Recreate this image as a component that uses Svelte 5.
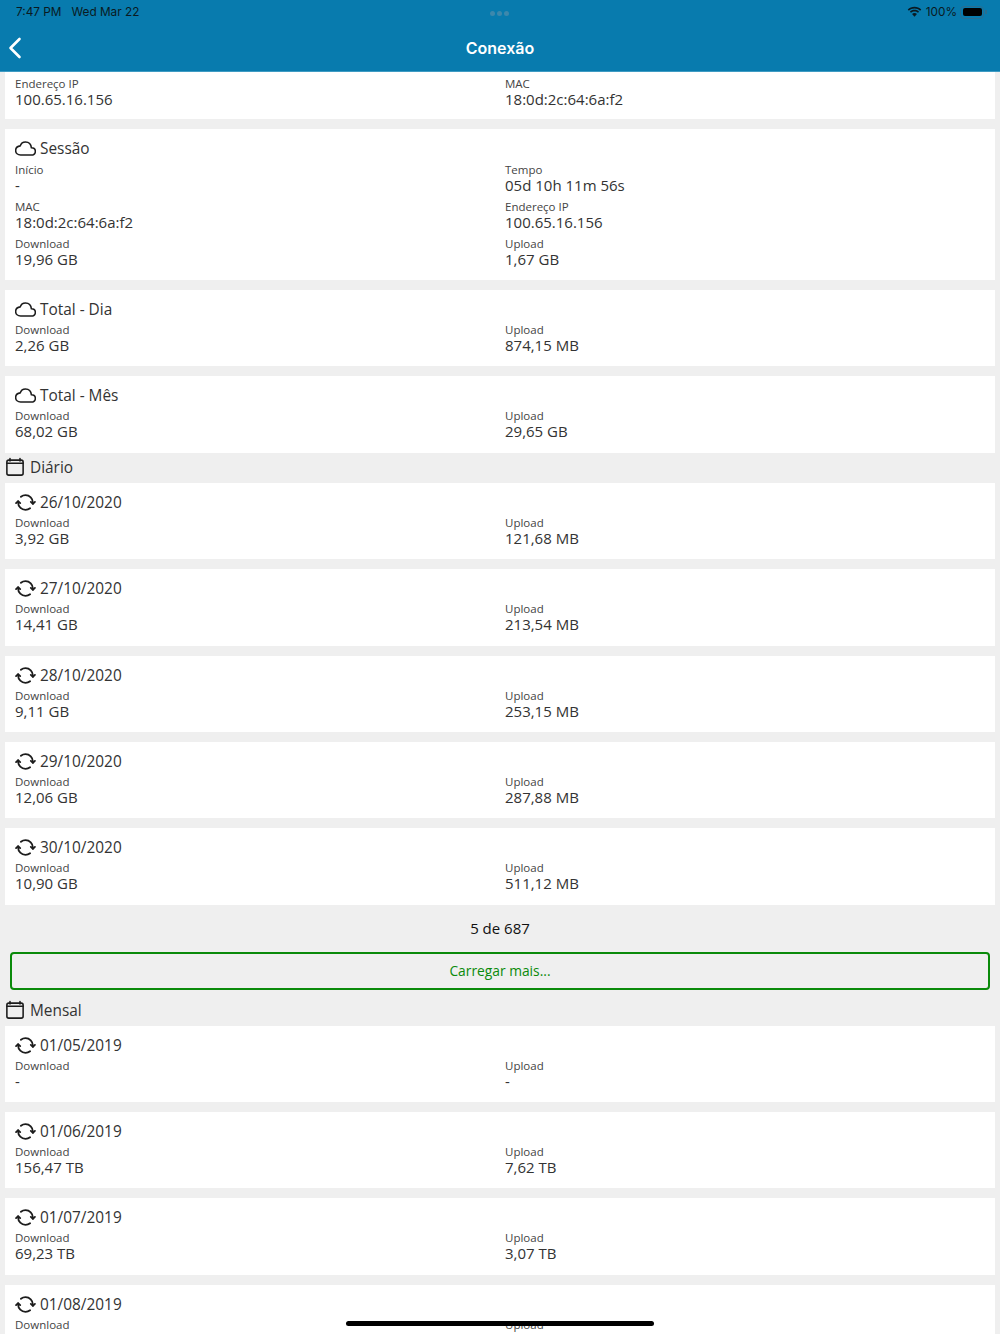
<script>
  const session = [
    [['Início', '-'], ['Tempo', '05d 10h 11m 56s']],
    [['MAC', '18:0d:2c:64:6a:f2'], ['Endereço IP', '100.65.16.156']],
    [['Download', '19,96 GB'], ['Upload', '1,67 GB']]
  ];
  const totals = [
    { title: 'Total - Dia', down: '2,26 GB', up: '874,15 MB' },
    { title: 'Total - Mês', down: '68,02 GB', up: '29,65 GB' }
  ];
  const daily = [
    { title: '26/10/2020', down: '3,92 GB', up: '121,68 MB' },
    { title: '27/10/2020', down: '14,41 GB', up: '213,54 MB' },
    { title: '28/10/2020', down: '9,11 GB', up: '253,15 MB' },
    { title: '29/10/2020', down: '12,06 GB', up: '287,88 MB' },
    { title: '30/10/2020', down: '10,90 GB', up: '511,12 MB' }
  ];
  const monthly = [
    { title: '01/05/2019', down: '-', up: '-' },
    { title: '01/06/2019', down: '156,47 TB', up: '7,62 TB' },
    { title: '01/07/2019', down: '69,23 TB', up: '3,07 TB' },
    { title: '01/08/2019', down: '', up: '' }
  ];
</script>

{#snippet cloud()}
  <svg class="icon" viewBox="0 0 512 512" fill="none" stroke="currentColor" stroke-width="38" stroke-linejoin="round">
    <path d="M400 240c-8.89-89.54-71-144-144-144-69 0-113.44 48.2-128 96C68 198 16 235.59 16 304c0 66 54 112 120 112h260c55 0 100-27.44 100-96 0-67.72-56-77.84-96-80z" />
  </svg>
{/snippet}

{#snippet sync()}
  <svg class="icon" viewBox="0 0 512 512" fill="none" stroke="currentColor" stroke-width="44" stroke-linecap="round" stroke-linejoin="round">
    <path d="M436 285v-29c0-98.73-80.24-178.79-179.2-178.79a179 179 0 00-112 40" />
    <path d="M76 227v29c0 99 81 179 180 179a180 180 0 00112-40" />
    <path d="M26 272l50-50 50 50M486 240l-50 50-50-50" />
  </svg>
{/snippet}

{#snippet calendar()}
  <svg class="icon cal" viewBox="0 0 512 512" fill="none" stroke="currentColor" stroke-width="40" stroke-linecap="round" stroke-linejoin="round">
    <rect x="48" y="80" width="416" height="384" rx="48" />
    <path d="M128 40v60M384 40v60" />
    <path d="M464 160H48" />
  </svg>
{/snippet}

{#snippet field(label, value)}
  <div class="field">
    <div class="label">{label}</div>
    <div class="value">{value}</div>
  </div>
{/snippet}

{#snippet card(item, icon)}
  <section class="card">
    <h2 class="title">{@render icon()}<span>{item.title}</span></h2>
    <div class="grid">
      {@render field('Download', item.down)}
      {@render field('Upload', item.up)}
    </div>
  </section>
{/snippet}

<div class="screen">
  <header class="header">
    <div class="status">
      <div class="status-left"><span>7:47 PM</span><span>Wed Mar 22</span></div>
      <div class="dots"><i></i><i></i><i></i></div>
      <div class="status-right">
        <svg class="wifi" viewBox="0 0 16 12" fill="currentColor">
          <path d="M8 2.2C10.3 2.2 12.4 3.1 14 4.6L15.2 3.3C13.3 1.5 10.8 0.4 8 0.4C5.2 0.4 2.7 1.5 0.8 3.3L2 4.6C3.6 3.1 5.7 2.2 8 2.2Z" />
          <path d="M8 5.4C9.4 5.4 10.7 5.9 11.7 6.9L12.9 5.6C11.6 4.4 9.9 3.7 8 3.7C6.1 3.7 4.4 4.4 3.1 5.6L4.3 6.9C5.3 5.9 6.6 5.4 8 5.4Z" />
          <path d="M8 7C7 7 6.1 7.4 5.4 8.1L8 11L10.6 8.1C9.9 7.4 9 7 8 7Z" />
        </svg>
        <span>100%</span>
        <div class="battery"><b></b></div>
        <div class="battery-tip"></div>
      </div>
    </div>
    <div class="nav">
      <svg class="back" viewBox="0 0 14 22" fill="none" stroke="currentColor" stroke-width="2.6" stroke-linecap="round" stroke-linejoin="round">
        <path d="M11.5 2L2.5 11L11.5 20" />
      </svg>
      <h1>Conexão</h1>
    </div>
  </header>

  <main class="content">
    <section class="card first">
      <div class="grid">
        {@render field('Endereço IP', '100.65.16.156')}
        {@render field('MAC', '18:0d:2c:64:6a:f2')}
      </div>
    </section>

    <section class="card sessao">
      <h2 class="title">{@render cloud()}<span>Sessão</span></h2>
      <div class="grid">
        {#each session as row}
          {#each row as cell}
            {@render field(cell[0], cell[1])}
          {/each}
        {/each}
      </div>
    </section>

    {#each totals as item}
      {@render card(item, cloud)}
    {/each}

    <div class="section">{@render calendar()}<span>Diário</span></div>
    <div class="list">
      {#each daily as item}
        {@render card(item, sync)}
      {/each}
    </div>

    <div class="count">5 de 687</div>
    <button class="more">Carregar mais...</button>

    <div class="section mensal">{@render calendar()}<span>Mensal</span></div>
    <div class="list">
      {#each monthly as item}
        {@render card(item, sync)}
      {/each}
    </div>
  </main>

  <div class="home"></div>
</div>

<style>
  :global(body) {
    background: #efefef;
  }
  * {
    box-sizing: border-box;
  }
  .screen {
    position: relative;
    width: 1000px;
    height: 1334px;
    overflow: hidden;
    background: #efefef;
    color: #333;
    font-family: "Open Sans", "Noto Sans", sans-serif;
  }
  .header {
    height: 72px;
    background: #087bae;
    border-bottom: 1px solid #3f9bc3;
    display: flex;
    flex-direction: column;
    font-family: Inter, sans-serif;
  }
  .status {
    height: 24px;
    padding: 0 13.5px 0 16px;
    display: flex;
    align-items: center;
    justify-content: space-between;
    color: #0a1a22;
    font-size: 11.8px;
    position: relative;
  }
  .status-left {
    display: flex;
    gap: 10px;
  }
  .dots {
    position: absolute;
    left: 490px;
    top: 11px;
    display: flex;
    gap: 2px;
  }
  .dots i {
    width: 5px;
    height: 5px;
    border-radius: 50%;
    background: #3d88ac;
  }
  .status-right {
    display: flex;
    align-items: center;
  }
  .wifi {
    width: 15px;
    height: 12px;
    margin-right: 4px;
  }
  .battery {
    width: 24px;
    height: 13px;
    margin-left: 3px;
    padding: 1.5px;
    border: 1px solid #2a6d8f;
    border-radius: 4px;
  }
  .battery b {
    display: block;
    height: 100%;
    background: #000;
    border-radius: 2px;
  }
  .battery-tip {
    width: 1.5px;
    height: 4px;
    margin-left: 1px;
    background: #2a6d8f;
  }
  .nav {
    flex: 1;
    position: relative;
    display: flex;
    align-items: center;
    justify-content: center;
    color: #fff;
  }
  .nav h1 {
    margin: 0;
    font-size: 16px;
    font-weight: 600;
  }
  .back {
    position: absolute;
    left: 8px;
    top: 13px;
    width: 14px;
    height: 22px;
  }
  .content {
    padding: 0 5px;
  }
  .card {
    background: #fff;
    height: 76.33px;
    padding: 8.5px 10px 0;
    margin-bottom: 10px;
  }
  .card.first {
    height: 47px;
    padding-top: 3px;
  }
  .card.sessao {
    height: 151px;
  }
  .sessao .title {
    margin-bottom: 1.5px;
  }
  .title {
    margin: 0 0 0.5px;
    height: 22px;
    display: flex;
    align-items: center;
    gap: 4.5px;
    font-size: 15.4px;
    font-weight: 400;
    color: #333;
  }
  .icon {
    width: 21px;
    height: 21px;
    flex: none;
    margin-left: -0.5px;
    color: #1c1c1c;
  }
  .icon.cal {
    width: 20px;
    height: 20px;
    margin-left: 0;
    margin-right: 0.5px;
  }
  .grid {
    display: grid;
    grid-template-columns: 490px 1fr;
    grid-auto-rows: 37px;
  }
  .field {
    height: 32px;
    padding-top: 1px;
  }
  .label {
    font-size: 11.5px;
    line-height: 15px;
    color: #444;
  }
  .value {
    font-size: 15px;
    line-height: 17px;
    color: #333;
  }
  .section {
    height: 30.5px;
    margin-top: -10px;
    margin-left: -5px;
    padding: 0 0 1px 5px;
    display: flex;
    align-items: center;
    gap: 4.5px;
    font-size: 15.4px;
    color: #333;
  }
  .count {
    height: 47px;
    margin-top: -10px;
    display: flex;
    align-items: center;
    justify-content: center;
    font-size: 15px;
    color: #111;
  }
  .more {
    display: block;
    width: 980px;
    height: 38px;
    margin: 0 5px;
    border: 2px solid #0a8a0a;
    border-radius: 4px;
    background: transparent;
    color: #0a8a0a;
    font: inherit;
    font-size: 13.8px;
  }
  .section.mensal {
    margin-top: 5px;
    height: 30.9px;
    padding-bottom: 0;
  }
  .home {
    position: absolute;
    left: 346px;
    bottom: 8px;
    width: 308px;
    height: 5px;
    border-radius: 3px;
    background: #000;
  }
</style>
